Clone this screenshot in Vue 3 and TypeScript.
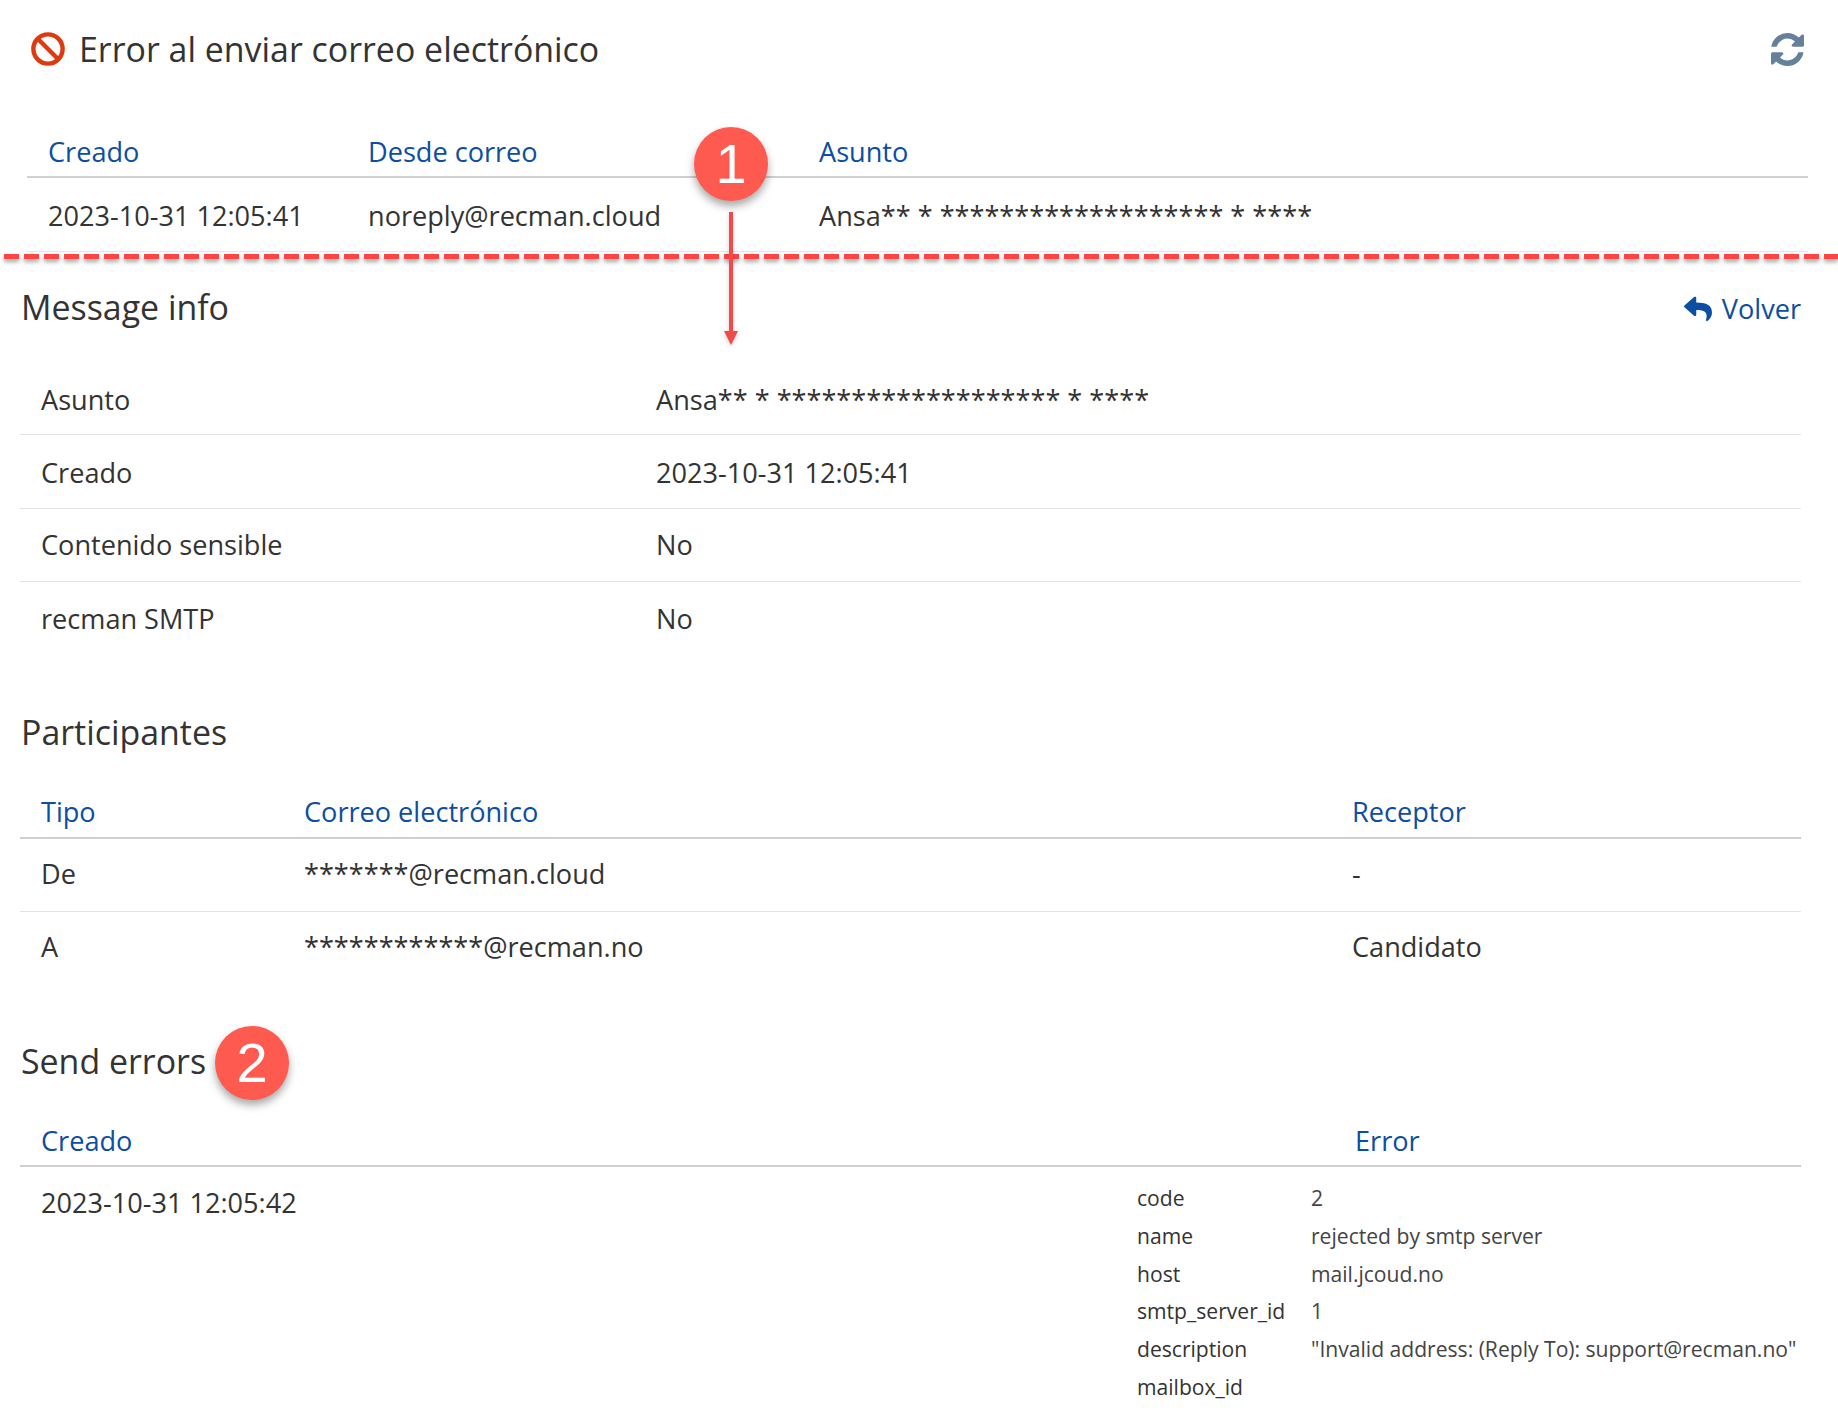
<script setup lang="ts">
const maskedSubject = 'Ansa** * ******************* * ****'
const info: [string, string][] = [
  ['Asunto', maskedSubject],
  ['Creado', '2023-10-31 12:05:41'],
  ['Contenido sensible', 'No'],
  ['recman SMTP', 'No'],
]
const participants: [string, string, string][] = [
  ['De', '*******@recman.cloud', '-'],
  ['A', '************@recman.no', 'Candidato'],
]
const errorDetails: [string, string][] = [
  ['code', '2'],
  ['name', 'rejected by smtp server'],
  ['host', 'mail.jcoud.no'],
  ['smtp_server_id', '1'],
  ['description', '"Invalid address: (Reply To): support@recman.no"'],
  ['mailbox_id', ''],
]
</script>

<template>
  <div class="page">
    <header class="top">
      <div class="title">
        <svg class="ban" viewBox="0 0 34 34" aria-hidden="true">
          <circle cx="17" cy="17" r="14.6" fill="none" stroke="#dd3a10" stroke-width="4.4" />
          <line x1="7" y1="7" x2="27" y2="27" stroke="#dd3a10" stroke-width="4.4" />
        </svg>
        <h1>Error al enviar correo electrónico</h1>
      </div>
      <svg class="refresh" viewBox="0 0 1536 1536" aria-hidden="true">
        <path d="M1511 928q0 5-1 7-64 268-268 434.5t-478 166.5q-146 0-282.5-55t-243.5-157l-129 129q-19 19-45 19t-45-19-19-45v-448q0-26 19-45t45-19h448q26 0 45 19t19 45-19 45l-137 137q71 66 161 102t187 36q134 0 250-65t186-179q11-17 53-117 8-23 30-23h192q13 0 22.5 9.5t9.5 22.5zm25-800v448q0 26-19 45t-45 19h-448q-26 0-45-19t-19-45 19-45l138-138q-148-137-349-137-134 0-250 65t-186 179q-11 17-53 117-8 23-30 23h-199q-13 0-22.5-9.5t-9.5-22.5v-7q65-268 270-434.5t480-166.5q146 0 284 55.5t245 156.5l130-129q19-19 45-19t45 19 19 45z" />
      </svg>
    </header>

    <section class="summary">
      <div class="row head summary-cols">
        <span>Creado</span><span>Desde correo</span><span>Asunto</span>
      </div>
      <div class="row summary-cols summary-data">
        <span>2023-10-31 12:05:41</span><span>noreply@recman.cloud</span><span>{{ maskedSubject }}</span>
      </div>
    </section>

    <section class="body">
      <div class="section-title first">
        <h2>Message info</h2>
        <a class="back">
          <svg viewBox="0 0 512 512" aria-hidden="true">
            <path d="M8.309 189.836L184.313 37.851C199.719 24.546 224 35.347 224 56.015v80.053c160.629 1.839 288 34.032 288 186.258 0 61.441-39.581 122.309-83.333 154.132-13.653 9.931-33.111-2.533-28.077-18.631 45.344-145.012-21.507-183.51-176.59-185.742V360c0 20.7-24.3 31.453-39.687 18.164l-176.004-152c-11.071-9.562-11.086-26.753 0-36.328z" />
          </svg>
          Volver
        </a>
      </div>
      <div class="info">
        <div v-for="([label, value], i) in info" :key="label" class="row info-cols" :class="{ last: i === info.length - 1 }">
          <span>{{ label }}</span><span>{{ value }}</span>
        </div>
      </div>

      <div class="section-title second">
        <h2>Participantes</h2>
      </div>
      <div class="row head part-head part-cols">
        <span>Tipo</span><span>Correo electrónico</span><span>Receptor</span>
      </div>
      <div v-for="([type, mail, role], i) in participants" :key="type" class="row part-cols part-data" :class="{ last: i === participants.length - 1 }">
        <span>{{ type }}</span><span>{{ mail }}</span><span>{{ role }}</span>
      </div>

      <div class="section-title third">
        <h2>Send errors</h2>
      </div>
      <div class="row head err-head err-head-cols">
        <span>Creado</span><span>Error</span>
      </div>
      <div class="err-row">
        <span class="err-date">2023-10-31 12:05:42</span>
        <dl class="details">
          <template v-for="[key, val] in errorDetails" :key="key">
            <dt>{{ key }}</dt><dd>{{ val }}</dd>
          </template>
        </dl>
      </div>
    </section>

    <div class="dash-line"></div>
    <div class="arrow"></div>
    <div class="badge badge-one">1</div>
    <div class="badge badge-two">2</div>
  </div>
</template>

<style>
html, body { margin: 0; background: #fff; }
</style>

<style scoped>
.page {
  position: relative;
  width: 1838px;
  height: 1425px;
  overflow: hidden;
  background: #fff;
  color: #333;
  font-family: "Open Sans", "Noto Sans", sans-serif;
  font-size: 27.12px;
  line-height: 36px;
}
h1, h2 { margin: 0; font-weight: 400; font-size: 33.9px; line-height: 44px; }
.top {
  height: 100px;
  box-sizing: border-box;
  padding: 0 34px 2px 31px;
  display: flex;
  align-items: center;
  justify-content: space-between;
}
.title { display: flex; align-items: center; gap: 14px; }
.ban { width: 34px; height: 34px; }
.refresh { width: 33px; height: 33px; fill: #64809b; }
.summary { margin: 0 30px 0 27px; }
.body { margin: 0 37px 0 20px; }
.row {
  display: grid;
  align-items: center;
  height: 74px;
  box-sizing: border-box;
  border-bottom: 1px solid #e3e3e3;
  padding-left: 21px;
}
.row.last { border-bottom: 0; }
.row.head {
  height: 78px;
  align-items: end;
  padding-bottom: 6px;
  color: #0b4ea2;
  border-bottom: 2px solid #d0d0d0;
}
.row.summary-data { padding-top: 2px; }
.row.part-head { height: 85px; padding-bottom: 7px; }
.row.err-head { height: 84px; }
.summary-cols { grid-template-columns: 320px 451px 1fr; }
.info-cols { grid-template-columns: 615px 1fr; height: 73.3px; }
.info-cols:nth-child(-n + 2) { padding-top: 3px; }
.part-cols { grid-template-columns: 263px 1048px 1fr; height: 72.5px; }
.row.part-data { padding-bottom: 2px; }
.err-head-cols { grid-template-columns: 1314px 1fr; }
.section-title { display: flex; justify-content: space-between; align-items: center; padding-left: 1px; }
.section-title.first { margin-top: 33px; margin-bottom: 33px; }
.section-title.second { margin-top: 55px; }
.section-title.third { margin-top: 55px; }
.back { display: flex; align-items: center; gap: 10px; color: #0b4ea2; transform: translateY(2px); }
.back svg { width: 28px; height: 28px; fill: #0b4ea2; }
.err-row { display: flex; justify-content: space-between; padding-left: 21px; }
.err-date { margin-top: 18px; }
.details {
  display: grid;
  grid-template-columns: 174px auto;
  grid-auto-rows: 37.8px;
  align-items: center;
  margin: 12px 0 0;
  width: 664px;
  font-size: 21.1px;
  line-height: 30px;
}
.details dd { margin: 0; color: #444; white-space: nowrap; }
.details dt { color: #333; }
.dash-line {
  position: absolute;
  left: 4px;
  right: 0;
  top: 254px;
  height: 5px;
  background: repeating-linear-gradient(90deg, #ff4444 0 15px, transparent 15px 20px);
  filter: drop-shadow(0 3px 2px rgba(0, 0, 0, 0.35));
}
.arrow {
  position: absolute;
  left: 729px;
  top: 212px;
  width: 4px;
  height: 120px;
  background: #f04a4a;
  filter: drop-shadow(0 2px 2px rgba(0, 0, 0, 0.2));
}
.arrow::after {
  content: "";
  position: absolute;
  left: -5.5px;
  bottom: -13px;
  border-left: 7.5px solid transparent;
  border-right: 7.5px solid transparent;
  border-top: 14px solid #f04a4a;
}
.badge {
  position: absolute;
  width: 74px;
  height: 74px;
  border-radius: 50%;
  background: #ff5a4f;
  color: #fff;
  font-family: "Liberation Sans", sans-serif;
  font-size: 56px;
  line-height: 74px;
  text-align: center;
  box-shadow: 0 5px 8px rgba(0, 0, 0, 0.35);
}
.badge-one { left: 694px; top: 127px; }
.badge-two { left: 215px; top: 1026px; }
</style>
